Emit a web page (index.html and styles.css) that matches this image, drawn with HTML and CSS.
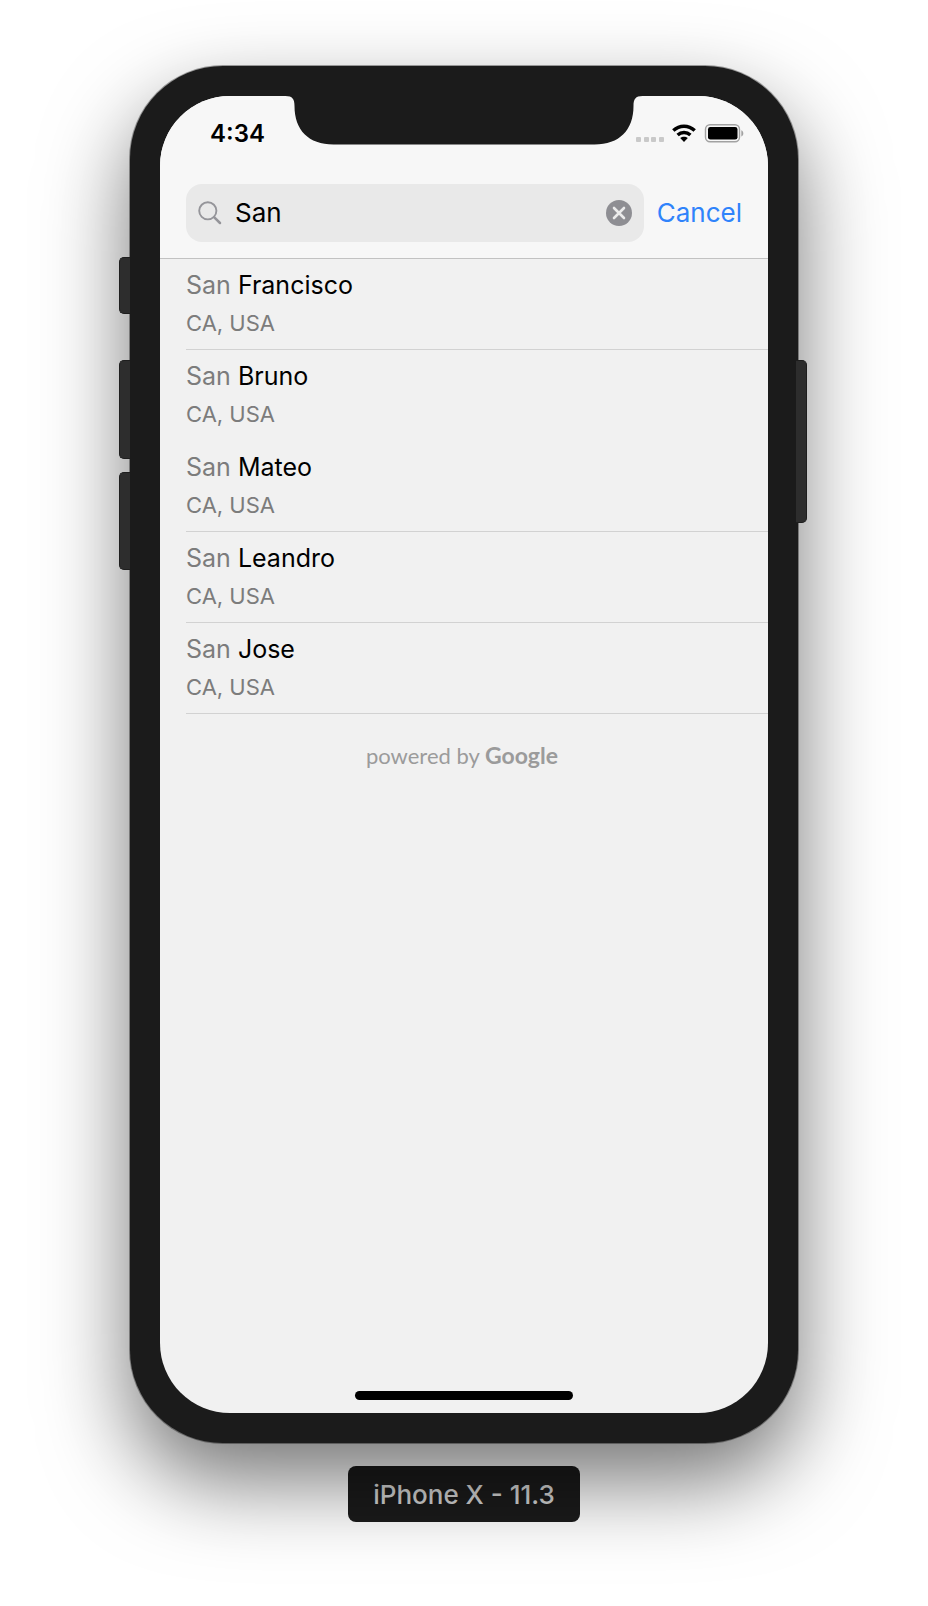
FILE: index.html
```html
<!DOCTYPE html>
<html lang="en">
<head>
<meta charset="utf-8">
<meta name="viewport" content="width=device-width, initial-scale=1">
<title>Place search</title>
<link rel="stylesheet" href="styles.css">
</head>
<body>
<div class="stage">
  <div class="phone">
    <span class="key key-mute"></span>
    <span class="key key-up"></span>
    <span class="key key-down"></span>
    <span class="key key-power"></span>
    <main class="screen">
      <svg class="notch" viewBox="0 0 357 49" aria-hidden="true"><path d="M0 0C7 0 9 3 9 10C9 34 23 48.500 48 48.500H309C334 48.500 348 34 348 10C348 3 350 0 357 0Z" fill="#1b1b1b"/></svg>
      <header class="top">
        <div class="status">
          <time class="clock">4:34</time>
          <div class="indicators">
            <svg class="signal" width="28" height="20" viewBox="0 0 28 20" aria-hidden="true"><g fill="#c9c9c9"><rect x="0" y="13" width="5" height="5" rx="1"/><rect x="8" y="13" width="5" height="5" rx="1"/><rect x="15" y="13" width="5" height="5" rx="1"/><rect x="23" y="13" width="5" height="5" rx="1"/></g></svg>
            <svg class="wifi" width="24" height="20" viewBox="0 0 24 20" aria-hidden="true"><g fill="none" stroke="#000" stroke-width="3.4"><path d="M1.3 6.6C7.500 .8 16.500 .8 22.700 6.600"/><path d="M5.600 11C9.300 7.600 14.700 7.600 18.400 11"/></g><path d="M8.200 14.100C10.300 12.200 13.700 12.200 15.800 14.100L12 18Z"/></svg>
            <svg class="battery" width="40" height="20" viewBox="0 0 40 20" aria-hidden="true"><rect x="1.500" y=".8" width="34" height="17" rx="4.500" fill="none" stroke="#a2a2a2" stroke-width="1.400"/><rect x="4" y="3" width="29.500" height="12.600" rx="2.400"/><path d="M37.300 6.200C40 7.400 40 11.400 37.300 12.600Z" fill="#a2a2a2"/></svg>
          </div>
        </div>
        <form class="search">
          <label class="field">
            <svg class="lens" width="24" height="24" viewBox="0 0 24 24" role="img" aria-label="Search"><g fill="none" stroke="#95959a" stroke-linecap="round"><circle cx="9.800" cy="9.800" r="8.600" stroke-width="1.900"/><path d="M16.300 16.300L22 22" stroke-width="2.500"/></g></svg>
            <input class="query" type="text" value="San" aria-label="Search places">
            <button class="clear" type="reset" aria-label="Clear"><svg width="26" height="26" viewBox="0 0 26 26"><circle cx="13" cy="13" r="13" fill="#8e8e93"/><path d="M8 8L18 18M18 8L8 18" stroke="#ebebeb" stroke-width="2.600" stroke-linecap="round"/></svg></button>
          </label>
          <button class="cancel" type="button">Cancel</button>
        </form>
      </header>
      <ul class="results">
        <li class="place"><p class="name"><span class="match">San</span> Francisco</p><p class="region">CA, USA</p></li>
        <li class="place place-open"><p class="name"><span class="match">San</span> Bruno</p><p class="region">CA, USA</p></li>
        <li class="place"><p class="name"><span class="match">San</span> Mateo</p><p class="region">CA, USA</p></li>
        <li class="place"><p class="name"><span class="match">San</span> Leandro</p><p class="region">CA, USA</p></li>
        <li class="place"><p class="name"><span class="match">San</span> Jose</p><p class="region">CA, USA</p></li>
      </ul>
      <p class="credit">powered by <span class="brand">Google</span></p>
      <span class="home"></span>
    </main>
  </div>
  <p class="device">iPhone X - 11.3</p>
</div>
</body>
</html>
```
FILE: styles.css
```css
* { box-sizing: border-box; }
body, p, ul { margin: 0; padding: 0; }
body {
  background: #fff;
  color: #000;
  font-family: Inter, "Liberation Sans", sans-serif;
}
button, input {
  border: 0;
  padding: 0;
  background: none;
  font: inherit;
}
.stage {
  display: flex;
  flex-direction: column;
  align-items: center;
  gap: 23px;
  padding: 66px 24px 84px;
}
.phone {
  position: relative;
  display: flex;
  width: 100%;
  max-width: 668px;
  min-height: 1377px;
  padding: 30px;
  border-radius: 93px;
  background: #1b1b1b;
  box-shadow: 0 0 0 1px rgba(0, 0, 0, .35), 0 38px 86px rgba(0, 0, 0, .54);
}
.key {
  position: absolute;
  left: -11px;
  width: 11px;
  border: 1px solid #1e1e1e;
  border-right: 0;
  border-radius: 5px 0 0 5px;
  background: #2d2d2d;
}
.key-mute { top: 191px; height: 57px; }
.key-up { top: 294px; height: 99px; }
.key-down { top: 406px; height: 98px; }
.key-power {
  top: 294px;
  right: -9px;
  left: auto;
  height: 163px;
  border: 1px solid #1e1e1e;
  border-left: 0;
  border-radius: 0 5px 5px 0;
}
.screen {
  position: relative;
  display: flex;
  flex: 1;
  flex-direction: column;
  overflow: hidden;
  border-radius: 70px;
  background: #f1f1f1;
}
.notch {
  position: absolute;
  top: 0;
  left: 50%;
  width: 357px;
  height: 49px;
  transform: translateX(-50%);
}
.top {
  border-bottom: 1px solid #c2c2c2;
  background: #f7f7f7;
}
.status {
  display: flex;
  align-items: center;
  justify-content: space-between;
  height: 76px;
  padding: 0 24px 0 50px;
}
.clock {
  font-size: 24px;
  font-weight: 600;
  line-height: 32px;
}
.indicators { display: flex; gap: 8px; }
.search {
  display: flex;
  align-items: center;
  gap: 13px;
  padding: 12px 26px 16px;
}
.field {
  display: flex;
  flex: 1;
  align-items: center;
  gap: 13px;
  min-width: 0;
  height: 58px;
  padding: 0 12px;
  border-radius: 16px;
  background: #e9e9e9;
}
.lens, .clear { flex: none; }
.query {
  flex: 1;
  min-width: 0;
  font-size: 26px;
  line-height: 32px;
  outline: 0;
}
.clear { display: flex; }
.cancel {
  color: #2f83fb;
  font-size: 26px;
  line-height: 32px;
}
.results {
  list-style: none;
  padding-left: 26px;
}
.place {
  padding: 8px 0 6px;
  border-bottom: 1px solid #d2d2d2;
}
.place-open { border-color: transparent; }
.name {
  font-size: 25px;
  line-height: 37px;
}
.match, .region { color: #7c7c7c; }
.region {
  font-size: 22px;
  line-height: 39px;
}
.credit {
  margin-top: 25px;
  padding-right: 4px;
  color: #9b9b9b;
  font-family: Lato, sans-serif;
  font-size: 22px;
  line-height: 32px;
  text-align: center;
}
.brand {
  font-size: 23px;
  font-weight: 700;
}
.home {
  align-self: center;
  width: 218px;
  height: 9px;
  margin-top: auto;
  margin-bottom: 13px;
  border-radius: 5px;
  background: #000;
}
.device {
  padding: 13px 25px 11px;
  border-radius: 8px;
  background: #1b1b1b;
  box-shadow: 0 0 0 2px rgba(255, 255, 255, .3);
  color: #d6d6d6;
  font-size: 26px;
  font-weight: 500;
  line-height: 32px;
}
```
